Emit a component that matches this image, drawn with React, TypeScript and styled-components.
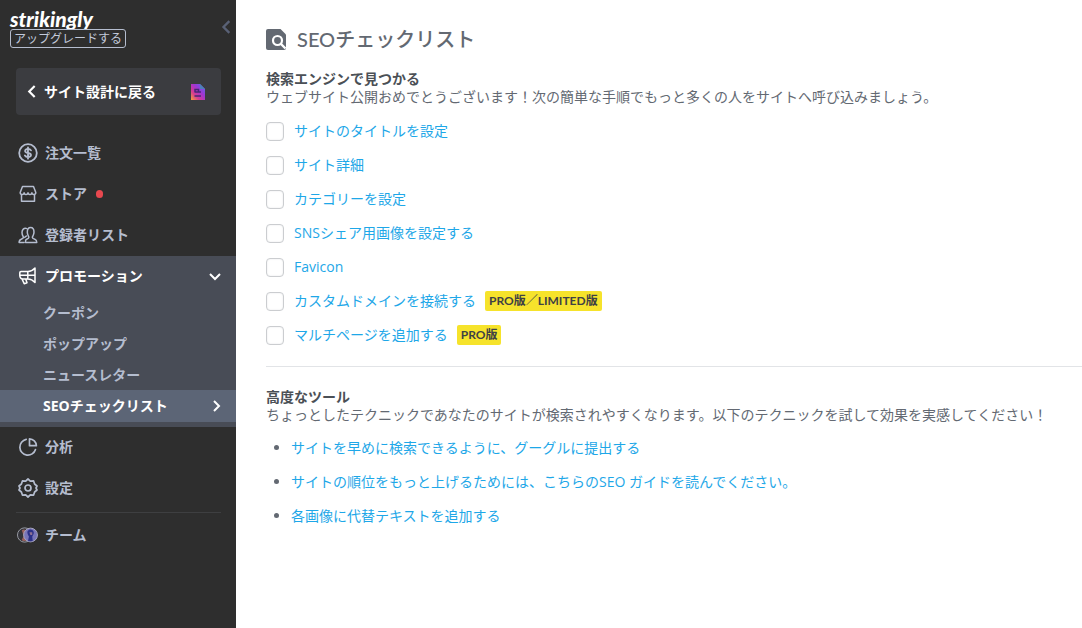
import React from "react";
import styled, { createGlobalStyle } from "styled-components";

const body = '"Open Sans", "Noto Sans CJK JP", sans-serif';
const display = 'Lato, "Noto Sans CJK JP", sans-serif';

const GlobalStyle = createGlobalStyle`
  * { box-sizing: border-box; }
  body { margin: 0; background: #fff; color: #636972; font: 14px/18px ${body}; }
  a { text-decoration: none; }
`;

const Page = styled.div`
  display: grid;
  grid-template-columns: 236px minmax(0, 1fr);
  min-height: 100vh;
`;

const Sidebar = styled.aside`
  background: #2e2e2e;
  color: #b5bdcf;
`;

const Brand = styled.header`
  display: flex;
  justify-content: space-between;
  align-items: flex-start;
  padding: 9px 2px 0 10px;
  height: 68px;
`;

const BrandText = styled.div`
  display: flex;
  flex-direction: column;
  align-items: flex-start;
`;

const Logo = styled.a`
  color: #fff;
  font: italic 900 21px/20px Lato, sans-serif;
`;

const Upgrade = styled.button`
  height: 19px;
  padding: 0 3px;
  border: 1px solid #b5bdcf;
  border-radius: 3px;
  background: none;
  color: #c3cadb;
  font: 12px/16px ${body};
  white-space: nowrap;
`;

const Collapse = styled.button`
  margin-top: 11px;
  padding: 0;
  border: 0;
  background: none;
  color: #596176;
  display: flex;
`;

const Back = styled.a`
  display: flex;
  align-items: center;
  gap: 5px;
  height: 47px;
  margin: 0 15px 18px 16px;
  padding: 0 15px 0 10px;
  border-radius: 4px;
  background: #3b3c40;
  color: #fff;
  font-weight: 700;
`;

const Grow = styled.span`
  flex: 1;
`;

const NavLink = styled.a<{ $active?: boolean }>`
  display: flex;
  align-items: center;
  height: 41px;
  padding: 0 15px 2px 17px;
  gap: 7px;
  color: ${(p) => (p.$active ? "#fff" : "#b5bdcf")};
  font-weight: 700;
`;

const IconBox = styled.span`
  display: flex;
  width: 21px;
  justify-content: center;
`;

const Dot = styled.span`
  width: 7px;
  height: 8px;
  margin-left: 2px;
  border-radius: 4px;
  background: #e8484f;
`;

const OpenGroup = styled.div`
  background: #484c56;
  padding-bottom: 5px;
`;

const SubLink = styled.a<{ $active?: boolean }>`
  display: flex;
  align-items: center;
  justify-content: space-between;
  height: ${(p) => (p.$active ? 32 : 31)}px;
  padding: 0 14px 0 43px;
  background: ${(p) => (p.$active ? "#5c6576" : "transparent")};
  color: ${(p) => (p.$active ? "#fff" : "#b5bdcf")};
  font-weight: 700;
`;

const NavRule = styled.hr`
  margin: 3px 15px 2px 16px;
  border: 0;
  border-top: 1px solid #3e3f41;
`;

const Main = styled.main`
  padding: 24px 0 40px 30px;
`;

const Title = styled.h1`
  display: flex;
  align-items: center;
  gap: 10px;
  margin: 0 0 16px;
  color: #636972;
  font: 500 20px/30px ${display};
`;

const Section = styled.section`
  & + & {
    margin-top: 21px;
    padding-top: 21px;
    border-top: 1px solid #e2e4e7;
  }
`;

const SectionTitle = styled.h2`
  margin: 0;
  color: #4b5056;
  font: 700 14px/18px ${body};
`;

const Lead = styled.p`
  margin: 0;
`;

const Checklist = styled.ul`
  display: flex;
  flex-direction: column;
  gap: 14px;
  margin: 15px 0 0;
  padding: 0;
  list-style: none;
`;

const CheckRow = styled.li`
  display: flex;
  align-items: center;
  height: 20px;
`;

const Check = styled.input`
  appearance: none;
  width: 18px;
  height: 19px;
  margin: 0 10px 0 0;
  border: 1px solid #cbcdd0;
  border-radius: 4px;
  background: #fff;
  box-shadow: inset 0 0 2px #e4e5e7;
`;

const TextLink = styled.a`
  color: #1ea7e8;
`;

const Badge = styled.span`
  margin-left: 9px;
  padding: 0 4px;
  border-radius: 2px;
  background: #f6e32b;
  color: #3f4144;
  font: 700 12px/20px ${display};
  white-space: nowrap;
`;

const Links = styled.ul`
  display: flex;
  flex-direction: column;
  gap: 14px;
  margin: 14px 0 0;
  padding-left: 25px;
  line-height: 20px;
`;

const Chevron = ({ dir, size = 12, w = 2 }: { dir: "left" | "right" | "down"; size?: number; w?: number }) => {
  const d = { left: "M8 1 3 6l5 5", right: "M4 1l5 5-5 5", down: "M1 4l5 5 5-5" }[dir];
  return (
    <svg width={size} height={size} viewBox="0 0 12 12" fill="none" stroke="currentColor" strokeWidth={w} aria-hidden="true">
      <path d={d} />
    </svg>
  );
};

const Line = ({ children }: { children: React.ReactNode }) => (
  <svg width="20" height="20" viewBox="0 0 20 20" fill="none" stroke="currentColor" strokeWidth="1.5" strokeLinejoin="round" strokeLinecap="round" aria-hidden="true">
    {children}
  </svg>
);

const icons = {
  orders: (
    <Line>
      <circle cx="10" cy="10" r="8.8" strokeWidth="1.8" />
      <path d="M13 7.4c-.6-1-1.7-1.4-3-1.4-1.700 0-2.900.7-2.900 2s1.200 1.700 2.900 2 3 .8 3 2.100S11.700 14 10 14c-1.400 0-2.500-.5-3.100-1.500M10 4.300v11.400" strokeWidth="1.800" />
    </Line>
  ),
  store: (
    <Line>
      <path d="M4.500 2.500h11l2.300 6c0 1.300-.8 2-1.900 2s-2-.7-2-1.700c0 1-.9 1.700-1.900 1.700s-2-.7-2-1.700c0 1-.9 1.700-2 1.700s-1.900-.7-1.900-1.700c0 1-.9 1.700-2 1.700s-1.900-.7-1.900-2zM3.500 10.500v6.700h13v-6.700" />
    </Line>
  ),
  people: (
    <Line>
      <path d="M7.500 17.500h11.300c0-2-.5-2.700-2-3.200-1.500-.5-2.500-.9-2.500-2 0-.7 1.700-2 1.700-5 0-2.600-1.200-4.800-3.400-4.800S9.300 4.700 9.300 7.300c0 3 1.600 4.300 1.600 5 0 1.100-1 1.500-2.300 2-1 .4-1.300 1.200-1.100 3.200z" />
      <path d="M8.900 3.600C5.800 2.600 4 4.800 4 7.600c0 2.800 1.500 3.900 1.500 4.700 0 1-.9 1.400-2.300 1.900-1.600.5-2.100 1.300-2.100 3.300h5M6.800 12.500c0-.8 1-1.200 1.600-1.500" />
    </Line>
  ),
  promo: (
    <Line>
      <path d="M3 5.500h7c2.600 0 5-1.300 7-3.500v14.500c-2-2.300-4.400-3.600-7-3.600H4.500C3 12.900 1.800 11.500 1.800 9.500V6.700c0-.7.500-1.200 1.200-1.200zM4 12.900l2.200 4.800 2.800-1-1.300-3.800M9.800 5.500v7.400M2 9.300h14.800" />
    </Line>
  ),
  stats: (
    <Line>
      <path d="M8.200 2.300A8 8 0 1 0 17.500 12.500M11.500 1.800v6.900h6.900a7.200 7.200 0 0 0-6.900-6.900z" strokeWidth="1.700" />
    </Line>
  ),
  settings: (
    <Line>
      <path d="m10 1 2.300 2.100 3.300-.2 1 3.100L19 8l-1 2 1 2-2.400 2-1 3.100-3.300-.2L10 19l-2.300-2.100-3.300.2-1-3.100L1 12l1-2-1-2 2.400-2 1-3.100 3.300.2z" strokeWidth="1.700" />
      <circle cx="10" cy="10" r="3" strokeWidth="1.700" />
    </Line>
  ),
};

const TeamIcon = () => (
  <svg width="22" height="18" viewBox="0 0 22 18" aria-hidden="true">
    <circle cx="8" cy="9" r="7.500" fill="#34343a" stroke="#999ca5" />
    <path d="M5 4c3-2 5 0 5 3l-2 3 3 4c-2 2-5 2-6 0l2-4z" fill="#98605c" />
    <circle cx="14.200" cy="9" r="7.200" fill="#7976ba" stroke="#aaa9c2" />
    <path d="M11 5c2-3 6-2 6.500 1 .3 3-1.500 3-1.500 5l.5 4.500h-5l1-5c-1-2-2-3-1.500-5.500z" fill="#2c3288" />
    <path d="M13 6h3v3h-2z" fill="#8f7295" />
  </svg>
);

const SiteIcon = () => (
  <svg width="16" height="16" viewBox="0 0 16 16" aria-hidden="true">
    <defs>
      <linearGradient id="site" x1="0" y1="1" x2="1" y2="0">
        <stop offset="0" stopColor="#f4a238" />
        <stop offset=".3" stopColor="#d63b91" />
        <stop offset=".6" stopColor="#9e35d5" />
        <stop offset="1" stopColor="#5271e8" />
      </linearGradient>
    </defs>
    <path d="M1 0h9l5 5v11H1z" fill="url(#site)" />
    <path d="M10 0v5h5z" fill="#4d80b7" />
    <path d="M5 8V5.500h3.500V8M4.500 8h6.500M4.500 12h6.500" fill="none" stroke="#482875" strokeWidth="1.500" />
  </svg>
);

const SeoIcon = () => (
  <svg width="21" height="22" viewBox="0 0 21 22" aria-hidden="true">
    <path d="M2 1h12.500L20 6.500V20a2 2 0 0 1-2 2H2a2 2 0 0 1-2-2V3a2 2 0 0 1 2-2z" fill="#636972" />
    <circle cx="11.500" cy="12.500" r="4.500" fill="none" stroke="#fff" strokeWidth="2.200" />
    <path d="m15 16 4.500 4.500" stroke="#fff" strokeWidth="2.400" />
  </svg>
);

type IconName = keyof typeof icons;
const Item = ({ icon, label, dot }: { icon: IconName; label: string; dot?: boolean }) => (
  <NavLink href="#">
    <IconBox>{icons[icon]}</IconBox>
    {label}
    {dot && <Dot />}
  </NavLink>
);

const checks: { label: string; badge?: string }[] = [
  { label: "サイトのタイトルを設定" },
  { label: "サイト詳細" },
  { label: "カテゴリーを設定" },
  { label: "SNSシェア用画像を設定する" },
  { label: "Favicon" },
  { label: "カスタムドメインを接続する", badge: "PRO版／LIMITED版" },
  { label: "マルチページを追加する", badge: "PRO版" },
];

const tools = [
  "サイトを早めに検索できるように、グーグルに提出する",
  "サイトの順位をもっと上げるためには、こちらのSEO ガイドを読んでください。",
  "各画像に代替テキストを追加する",
];

export default function App() {
  return (
    <Page lang="ja">
      <GlobalStyle />
      <Sidebar>
        <Brand>
          <BrandText>
            <Logo href="#">strikingly</Logo>
            <Upgrade type="button">アップグレードする</Upgrade>
          </BrandText>
          <Collapse type="button" aria-label="メニューを閉じる">
            <Chevron dir="left" size={14} />
          </Collapse>
        </Brand>
        <Back href="#">
          <Chevron dir="left" size={13} />
          サイト設計に戻る
          <Grow />
          <SiteIcon />
        </Back>
        <nav>
          <Item icon="orders" label="注文一覧" />
          <Item icon="store" label="ストア" dot />
          <Item icon="people" label="登録者リスト" />
          <OpenGroup>
            <NavLink href="#" $active>
              <IconBox>{icons.promo}</IconBox>
              プロモーション
              <Grow />
              <Chevron dir="down" />
            </NavLink>
            <SubLink href="#">クーポン</SubLink>
            <SubLink href="#">ポップアップ</SubLink>
            <SubLink href="#">ニュースレター</SubLink>
            <SubLink href="#" $active aria-current="page">
              SEOチェックリスト
              <Chevron dir="right" />
            </SubLink>
          </OpenGroup>
          <Item icon="stats" label="分析" />
          <Item icon="settings" label="設定" />
          <NavRule />
          <NavLink href="#">
            <IconBox>
              <TeamIcon />
            </IconBox>
            チーム
          </NavLink>
        </nav>
      </Sidebar>
      <Main>
        <Title>
          <SeoIcon />
          SEOチェックリスト
        </Title>
        <Section>
          <SectionTitle>検索エンジンで見つかる</SectionTitle>
          <Lead>ウェブサイト公開おめでとうございます！次の簡単な手順でもっと多くの人をサイトへ呼び込みましょう。</Lead>
          <Checklist>
            {checks.map((c, i) => (
              <CheckRow key={c.label}>
                <Check type="checkbox" aria-labelledby={`check-${i}`} />
                <TextLink href="#" id={`check-${i}`}>
                  {c.label}
                </TextLink>
                {c.badge && <Badge>{c.badge}</Badge>}
              </CheckRow>
            ))}
          </Checklist>
        </Section>
        <Section>
          <SectionTitle>高度なツール</SectionTitle>
          <Lead>ちょっとしたテクニックであなたのサイトが検索されやすくなります。以下のテクニックを試して効果を実感してください！</Lead>
          <Links>
            {tools.map((t) => (
              <li key={t}>
                <TextLink href="#">{t}</TextLink>
              </li>
            ))}
          </Links>
        </Section>
      </Main>
    </Page>
  );
}
